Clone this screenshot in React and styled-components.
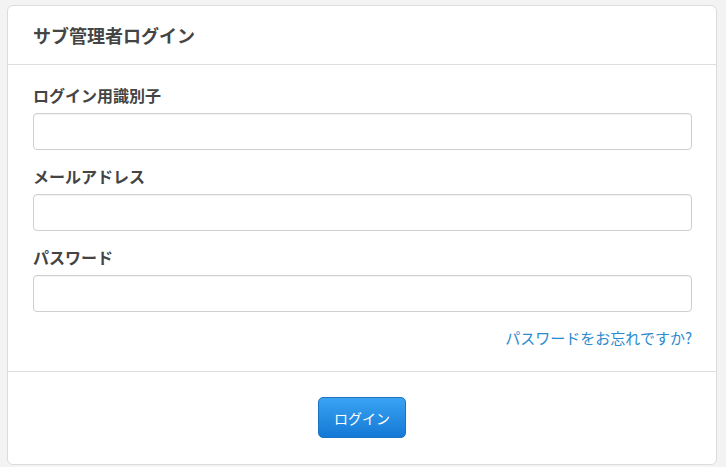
import React from "react";
import styled, { createGlobalStyle } from "styled-components";

const GlobalStyle = createGlobalStyle`
  html, body {
    margin: 0;
    padding: 0;
    background: #f3f3f3;
    font-family: "Noto Sans CJK JP", "Liberation Sans", sans-serif;
  }
`;

const Page = styled.div`
  padding: 5px 9px 2px 7px;
`;

const Card = styled.div`
  background: #fff;
  border: 1px solid #dcdcdc;
  border-radius: 6px;
`;

const Header = styled.div`
  height: 58px;
  padding: 0 25px;
  display: flex;
  align-items: center;
  border-bottom: 1px solid #dedede;
`;

const Title = styled.h2`
  margin: 0;
  font-size: 18px;
  font-weight: bold;
  color: #444;
`;

const Body = styled.div`
  padding: 20px 24px 23px 25px;
  border-bottom: 1px solid #dedede;
`;

const Group = styled.div`
  margin-bottom: 16px;
`;

const Label = styled.label`
  display: block;
  height: 20px;
  line-height: 20px;
  margin-bottom: 8px;
  font-size: 16px;
  font-weight: bold;
  color: #444;
`;

const Input = styled.input`
  display: block;
  box-sizing: border-box;
  width: 100%;
  height: 37px;
  border: 1px solid #cfcfcf;
  border-radius: 4px;
  padding: 0 10px;
  font-size: 14px;
  font-family: inherit;
  box-shadow: inset 0 1px 1px rgba(0, 0, 0, 0.05);
`;

const LinkRow = styled.div`
  display: flex;
  justify-content: flex-end;
  line-height: 20px;
`;

const Link = styled.a`
  font-size: 15px;
  color: #2a8ccf;
  text-decoration: none;
`;

const Footer = styled.div`
  display: flex;
  justify-content: center;
  padding: 25px 0 26px;
`;

const Button = styled.button`
  width: 88px;
  height: 41px;
  border: 1px solid #1a73c4;
  border-radius: 5px;
  background: linear-gradient(#3aa3f2, #1479d6);
  color: #fff;
  font-family: inherit;
  font-size: 14px;
`;

const fields = [
  { label: "ログイン用識別子", type: "text" },
  { label: "メールアドレス", type: "email" },
  { label: "パスワード", type: "password" },
];

export default function App() {
  return (
    <>
      <GlobalStyle />
      <Page>
        <Card>
          <Header>
            <Title>サブ管理者ログイン</Title>
          </Header>
          <Body>
            {fields.map((f) => (
              <Group key={f.label}>
                <Label>{f.label}</Label>
                <Input type={f.type} />
              </Group>
            ))}
            <LinkRow>
              <Link href="#">パスワードをお忘れですか?</Link>
            </LinkRow>
          </Body>
          <Footer>
            <Button>ログイン</Button>
          </Footer>
        </Card>
      </Page>
    </>
  );
}
